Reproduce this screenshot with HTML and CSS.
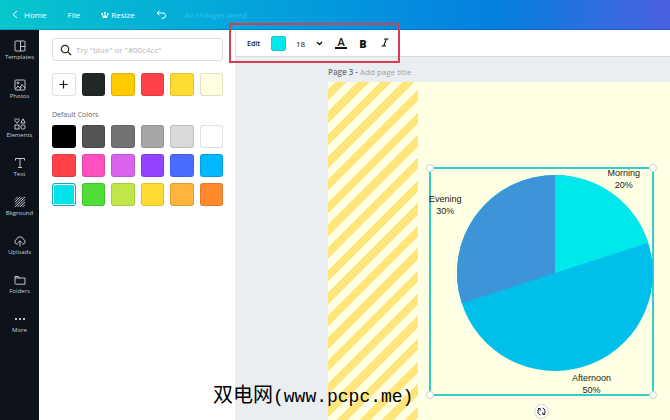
FILE: index.html
```html
<!DOCTYPE html>
<html lang="en">
<head>
    <meta charset="UTF-8">
    <meta name="viewport" content="width=device-width, initial-scale=1.0">
    <title>Design Editor</title>
    <link rel="stylesheet" href="styles.css">
</head>
<body>
    <header class="topbar">
        <a class="home" href="#">
            <svg width="6" height="9" viewBox="0 0 6 9"><path d="M5 1 1 4.5 5 8" fill="none" stroke="currentColor"/></svg>
            Home
        </a>
        <button class="file">File</button>
        <button class="resize">
            <svg width="8" height="8" viewBox="0 0 8 8"><path d="M2 7 1.500 4.800 3 5.300 4 3.500 5 5.300 6.500 4.800 6 7z" fill="currentColor"/><circle cx="4" cy="1.600" r=".9" fill="currentColor"/><circle cx="1.100" cy="2.800" r=".9" fill="currentColor"/><circle cx="6.900" cy="2.800" r=".9" fill="currentColor"/><path d="M1.100 3 2.500 6M6.900 3 5.500 6M4 2v4" stroke="currentColor" fill="none"/></svg>
            Resize
        </button>
        <button class="undo" aria-label="Undo">
            <svg width="11" height="9" viewBox="0 0 11 9"><path d="M3.500 .8 1 3l2.500 2.200M1.200 3H7a2.600 2.600 0 0 1 0 5.200H5.500" fill="none" stroke="currentColor"/></svg>
        </button>
        <span class="status">All changes saved</span>
    </header>

    <div class="workspace">
        <nav class="rail">
            <a href="#">
                <svg viewBox="0 0 12 12"><rect x="1" y="1" width="10" height="10" rx="1"/><path d="M6.500 1v10M6.500 6.500H11"/></svg>
                Templates
            </a>
            <a href="#">
                <svg viewBox="0 0 12 12"><rect x="1" y="1" width="10" height="10" rx="1"/><circle cx="4" cy="4" r="1"/><path d="M1.500 10 4 7l1.800 2L8 5.500 11 9M5.500 11l2-3"/></svg>
                Photos
            </a>
            <a href="#">
                <svg viewBox="0 0 12 12"><path d="M3 5.200 .8 2.500A1.200 1.200 0 0 1 3 1.500a1.200 1.200 0 0 1 2.200 1zM9 .8 11.200 5H6.800z"/><rect x="1" y="7" width="4" height="4"/><circle cx="9" cy="9" r="2.200"/></svg>
                Elements
            </a>
            <a href="#">
                <svg viewBox="0 0 12 12"><path d="M1.500 3.500V1.500h9v2M6 1.500v9M4 10.500h4"/></svg>
                Text
            </a>
            <a href="#">
                <svg viewBox="0 0 12 12"><path d="M1 3.500 3.500 1M1 6 6 1M1 8.500 8.500 1M1 11 11 1M3.500 11 11 3.500M6 11l5-5M8.500 11 11 8.500"/></svg>
                Bkground
            </a>
            <a href="#">
                <svg viewBox="0 0 12 12"><path d="M4 9H3A2.300 2.300 0 0 1 2.500 4.500a3.600 3.600 0 0 1 7 0A2.300 2.300 0 0 1 9 9H8M6 11.500V6M4.200 7.600 6 5.800l1.800 1.800"/></svg>
                Uploads
            </a>
            <a href="#">
                <svg viewBox="0 0 12 12"><path d="M1 9.500v-7h3.500L5.500 4H11v6.200H1.500zM1 4h5"/></svg>
                Folders
            </a>
            <a href="#">
                <svg class="dots" viewBox="0 0 12 12"><circle cx="2" cy="6" r="1"/><circle cx="6" cy="6" r="1"/><circle cx="10" cy="6" r="1"/></svg>
                More
            </a>
        </nav>

        <aside class="panel">
            <label class="search">
                <svg width="12" height="12" viewBox="0 0 12 12"><circle cx="5" cy="5" r="3.700"/><path d="m7.800 7.800 3.200 3.200"/></svg>
                <input type="text" placeholder='Try "blue" or "#00c4cc"' aria-label="Search colors">
            </label>
            <div class="swatches">
                <button class="swatch add" aria-label="Add color"><svg width="9" height="9" viewBox="0 0 9 9"><path d="M4.500 .5v8M.5 4.500h8"/></svg></button>
                <button class="swatch charcoal" aria-label="Charcoal"></button>
                <button class="swatch gold" aria-label="Gold"></button>
                <button class="swatch red" aria-label="Red"></button>
                <button class="swatch yellow" aria-label="Yellow"></button>
                <button class="swatch cream" aria-label="Cream"></button>
            </div>
            <h2>Default Colors</h2>
            <div class="swatches">
                <button class="swatch black" aria-label="Black"></button>
                <button class="swatch gray1" aria-label="Dark gray"></button>
                <button class="swatch gray2" aria-label="Gray"></button>
                <button class="swatch gray3" aria-label="Medium gray"></button>
                <button class="swatch gray4" aria-label="Light gray"></button>
                <button class="swatch white" aria-label="White"></button>
                <button class="swatch red" aria-label="Red"></button>
                <button class="swatch pink" aria-label="Pink"></button>
                <button class="swatch orchid" aria-label="Orchid"></button>
                <button class="swatch purple" aria-label="Purple"></button>
                <button class="swatch blue" aria-label="Blue"></button>
                <button class="swatch sky" aria-label="Sky"></button>
                <button class="swatch cyan selected" aria-label="Cyan"></button>
                <button class="swatch green" aria-label="Green"></button>
                <button class="swatch lime" aria-label="Lime"></button>
                <button class="swatch yellow" aria-label="Yellow"></button>
                <button class="swatch amber" aria-label="Amber"></button>
                <button class="swatch orange" aria-label="Orange"></button>
            </div>
        </aside>

        <main class="editor">
            <div class="toolbar">
                <button class="edit">Edit</button>
                <button class="current" aria-label="Color"></button>
                <button class="size">18
                    <svg width="7" height="5" viewBox="0 0 7 5"><path d="m1 1 2.500 2.500L6 1" fill="none" stroke="currentColor" stroke-width="1.300"/></svg>
                </button>
                <button class="underlined" aria-label="Text color">A</button>
                <button class="bold" aria-label="Bold">B</button>
                <button aria-label="Italic"><svg width="8" height="9" viewBox="0 0 8 9"><path d="M3 1h4.500M.5 8H5M5.300 1 2.700 8" fill="none" stroke="currentColor" stroke-width="1.100"/></svg></button>
                <div class="highlight"></div>
            </div>

            <div class="canvas">
                <p class="page-title"><b>Page 3 -</b> Add page title</p>
                <div class="page">
                    <div class="stripes"></div>
                    <div class="chart">
                        <svg class="pie" viewBox="0 0 196 196">
                            <circle cx="98" cy="98" r="98" fill="#00bfea"/>
                            <path d="M98 98V0A98 98 0 0 1 191.200 67.700z" fill="#00e8ec"/>
                            <path d="M98 98 4.800 128.300A98 98 0 0 1 98 0z" fill="#3d94d7"/>
                        </svg>
                        <span class="slice morning">Morning<br>20%</span>
                        <span class="slice evening">Evening<br>30%</span>
                        <span class="slice afternoon">Afternoon<br>50%</span>
                        <i class="handle top left"></i>
                        <i class="handle top right"></i>
                        <i class="handle bottom left"></i>
                        <i class="handle bottom right"></i>
                        <button class="rotate" aria-label="Rotate">
                            <svg width="9" height="9" viewBox="0 0 9 9"><path d="M3.500 8A3.600 3.600 0 0 1 2.500 1.500M1 1.500h2.200v2.200M5.500 1a3.600 3.600 0 0 1 1 6.500M8 7.500H5.800V5.300" fill="none" stroke="currentColor"/></svg>
                        </button>
                    </div>
                </div>
            </div>
        </main>
    </div>

    <div class="watermark"><span>双电网</span>(www.pcpc.me)</div>
</body>
</html>
```

FILE: styles.css
```css
* {
    box-sizing: border-box;
}
body {
    margin: 0;
    height: 100vh;
    display: flex;
    flex-direction: column;
    overflow: hidden;
    position: relative;
    font-family: "Open Sans", sans-serif;
    font-size: 8px;
    color: #222;
}
button {
    border: 0;
    padding: 0;
    background: none;
    font: inherit;
    color: inherit;
}
a {
    color: inherit;
    text-decoration: none;
}
svg {
    flex: none;
}

/* top bar */
.topbar {
    flex: none;
    height: 30px;
    display: flex;
    align-items: center;
    padding-left: 12px;
    color: #fff;
    font-weight: 500;
    background: linear-gradient(90deg, #07c6cc, #04a6dc 35%, #0480e0 74%, #4a60e2);
    border-bottom: 1px solid rgba(0, 60, 180, 0.3);
}
.home {
    display: flex;
    align-items: center;
    gap: 6px;
}
.file {
    margin-left: 21px;
}
.resize {
    display: flex;
    align-items: center;
    gap: 2px;
    margin-left: 21px;
}
.undo {
    display: flex;
    margin-left: 21px;
}
.status {
    margin-left: 18px;
    font-weight: 400;
    font-style: italic;
    color: #2cc4ec;
}

.workspace {
    flex: 1;
    min-height: 0;
    display: flex;
}

/* left rail */
.rail {
    flex: none;
    width: 39px;
    padding-top: 10px;
    background: #0e131b;
    color: #c8ccd2;
    font-size: 6px;
    line-height: 10px;
}
.rail a {
    height: 39px;
    display: flex;
    flex-direction: column;
    align-items: center;
}
.rail svg {
    width: 12px;
    height: 12px;
    fill: none;
    stroke: #d4d7dc;
    stroke-width: 0.9;
}
.rail .dots {
    fill: #fff;
    stroke: none;
}

/* color panel */
.panel {
    flex: none;
    width: 196px;
    padding: 8px 12px 0 13px;
}
.search {
    height: 23px;
    display: flex;
    align-items: center;
    gap: 4px;
    padding-left: 7px;
    border: 1px solid #dcdfe2;
    border-radius: 3px;
}
.search svg {
    fill: none;
    stroke: #222;
    stroke-width: 1.2;
}
.search input {
    flex: 1;
    min-width: 0;
    border: 0;
    padding: 0;
    outline: 0;
    font: inherit;
}
.search input::placeholder {
    color: #b4b8bc;
}
.swatches {
    display: grid;
    grid-template-columns: repeat(6, 1fr);
    gap: 6px;
    margin-top: 12px;
}
.swatch {
    height: 23px;
    border: 1px solid rgba(0, 0, 0, 0.12);
    border-radius: 3px;
}
.panel h2 {
    margin: 14px 0 0;
    font-size: 7px;
    line-height: 10px;
    font-weight: 400;
    color: #666;
}
.panel h2 + .swatches {
    margin-top: 5px;
}
.add {
    display: flex;
    align-items: center;
    justify-content: center;
}
.add svg {
    stroke: #111;
    stroke-width: 1.2;
}
.charcoal { background: #222827; }
.gold { background: #ffcb00; }
.red { background: #ff4149; }
.yellow { background: #ffdc32; }
.cream { background: #ffffe0; }
.black { background: #000; }
.gray1 { background: #545454; }
.gray2 { background: #737373; }
.gray3 { background: #a6a6a6; }
.gray4 { background: #d9d9d9; }
.white { background: #fff; }
.pink { background: #ff50c0; }
.orchid { background: #d963ec; }
.purple { background: #9442ff; }
.blue { background: #4a6dff; }
.sky { background: #00b8ff; }
.cyan { background: #00e3ea; }
.green { background: #4fdd37; }
.lime { background: #c0e648; }
.amber { background: #ffb53b; }
.orange { background: #ff8a2e; }
.selected {
    border-color: #1aa9b5;
    box-shadow: inset 0 0 0 1px #fff;
}

/* editor */
.editor {
    flex: 1;
    min-width: 0;
    display: flex;
    flex-direction: column;
}
.toolbar {
    position: relative;
    flex: none;
    height: 27px;
    display: flex;
    align-items: center;
    padding-left: 11px;
    color: #111;
    border-left: 1px solid #e2e5e8;
    border-bottom: 1px solid #d8dbdf;
}
.edit {
    font-size: 7px;
    font-weight: 600;
}
.current {
    width: 15px;
    height: 15px;
    margin-left: 11px;
    background: #00e8ec;
    border: 1px solid #1cc8cf;
    border-radius: 2px;
}
.size {
    display: flex;
    align-items: center;
    gap: 11px;
    margin: 0 12px 0 10px;
    font-weight: 500;
}
.underlined {
    width: 12px;
    border-bottom: 2px solid #111;
    font-size: 11px;
    line-height: 10px;
    font-weight: 600;
}
.bold {
    margin: 0 14px 0 12px;
    font-size: 11px;
    font-weight: 800;
}
.highlight {
    position: absolute;
    left: -7px;
    top: -7px;
    width: 171px;
    height: 40px;
    border: 2px solid #d6404c;
    pointer-events: none;
}
.canvas {
    flex: 1;
    display: flex;
    flex-direction: column;
    padding: 10px 0 0 93px;
    background: #ebeef1;
}
.page-title {
    margin: 0 0 5px;
    line-height: 10px;
    color: #9a9fa5;
}
.page-title b {
    font-weight: 600;
    color: #6b7178;
}
.page {
    position: relative;
    flex: 1;
    background: #ffffe3;
}
.stripes {
    width: 90px;
    height: 100%;
    background: repeating-linear-gradient(135deg, #ffffe3 0 5px, #ffe57a 5px 13px, #ffffe3 13px 16px);
}

/* chart placed on the page */
.chart {
    position: absolute;
    left: 101px;
    top: 85px;
    width: 225px;
    height: 229px;
    border: 2px solid #35cdc9;
    font-family: "Liberation Sans", Arial, sans-serif;
    font-size: 9px;
    line-height: 12px;
}
.pie {
    position: absolute;
    left: 26px;
    top: 6px;
    width: 196px;
    height: 196px;
}
.slice {
    position: absolute;
    text-align: center;
}
.morning {
    right: 12px;
    top: -2px;
}
.evening {
    left: -2px;
    top: 24px;
}
.afternoon {
    right: 41px;
    bottom: -2px;
}
.handle {
    position: absolute;
    width: 8px;
    height: 8px;
    background: #fff;
    border: 1px solid #cfd2d0;
    border-radius: 50%;
}
.handle.top { top: -5px; }
.handle.bottom { bottom: -5px; }
.handle.left { left: -5px; }
.handle.right { right: -5px; }
.rotate {
    position: absolute;
    left: 103px;
    bottom: -25px;
    width: 15px;
    height: 15px;
    display: flex;
    align-items: center;
    justify-content: center;
    background: #fff;
    border: 1px solid #cfd2d0;
    border-radius: 50%;
}

.watermark {
    position: absolute;
    left: 213px;
    bottom: 9px;
    font-family: "Liberation Mono", "Noto Sans CJK SC", monospace;
    font-size: 18px;
    line-height: 28px;
    color: #000;
    white-space: nowrap;
}
.watermark span {
    font-size: 20px;
}
```
